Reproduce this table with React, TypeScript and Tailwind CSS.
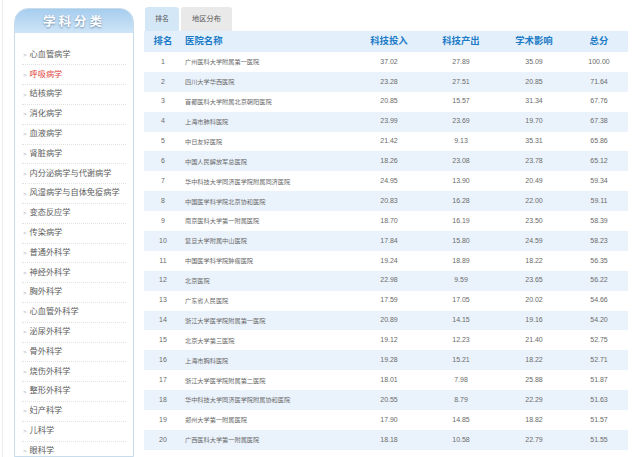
import React from 'react';

const categories = [
  '心血管病学', '呼吸病学', '结核病学', '消化病学', '血液病学', '肾脏病学',
  '内分泌病学与代谢病学', '风湿病学与自体免疫病学', '变态反应学', '传染病学',
  '普通外科学', '神经外科学', '胸外科学', '心血管外科学', '泌尿外科学',
  '骨外科学', '烧伤外科学', '整形外科学', '妇产科学', '儿科学', '眼科学',
];

const rows: [string, string, string, string, string][] = [
  ['广州医科大学附属第一医院', '37.02', '27.89', '35.09', '100.00'],
  ['四川大学华西医院', '23.28', '27.51', '20.85', '71.64'],
  ['首都医科大学附属北京朝阳医院', '20.85', '15.57', '31.34', '67.76'],
  ['上海市肺科医院', '23.99', '23.69', '19.70', '67.38'],
  ['中日友好医院', '21.42', '9.13', '35.31', '65.86'],
  ['中国人民解放军总医院', '18.26', '23.08', '23.78', '65.12'],
  ['华中科技大学同济医学院附属同济医院', '24.95', '13.90', '20.49', '59.34'],
  ['中国医学科学院北京协和医院', '20.83', '16.28', '22.00', '59.11'],
  ['南京医科大学第一附属医院', '18.70', '16.19', '23.50', '58.39'],
  ['复旦大学附属中山医院', '17.84', '15.80', '24.59', '58.23'],
  ['中国医学科学院肿瘤医院', '19.24', '18.89', '18.22', '56.35'],
  ['北京医院', '22.98', '9.59', '23.65', '56.22'],
  ['广东省人民医院', '17.59', '17.05', '20.02', '54.66'],
  ['浙江大学医学院附属第一医院', '20.89', '14.15', '19.16', '54.20'],
  ['北京大学第三医院', '19.12', '12.23', '21.40', '52.75'],
  ['上海市胸科医院', '19.28', '15.21', '18.22', '52.71'],
  ['浙江大学医学院附属第二医院', '18.01', '7.98', '25.88', '51.87'],
  ['华中科技大学同济医学院附属协和医院', '20.55', '8.79', '22.29', '51.63'],
  ['郑州大学第一附属医院', '17.90', '14.85', '18.82', '51.57'],
  ['广西医科大学第一附属医院', '18.18', '10.58', '22.79', '51.55'],
];

const cols = 'grid grid-cols-[38px_172px_70px_74px_72px_58px]';

export default function App() {
  return (
    <div
      className="relative w-[640px] h-[457px] overflow-hidden bg-white flex pl-[14px] pt-[8px] gap-[10px]"
      style={{ fontFamily: '"Liberation Sans", "Noto Sans CJK SC", sans-serif' }}
    >
      {/* 左侧细线 */}
      <div className="absolute left-[2px] top-0 bottom-0 w-px bg-[#ececec]" />

      {/* 学科分类 */}
      <div className="w-[120px] shrink-0 border border-[#c8dcec] rounded-t-[14px] bg-white">
        <div className="h-[24px] rounded-t-[13px] bg-gradient-to-b from-[#a6cdee] to-[#cfe5f7] flex items-center justify-center pt-[2px]">
          <span className="text-white text-[12.5px] font-bold tracking-[3px] [text-shadow:0_1px_2px_rgba(60,90,120,0.6)]">
            学科分类
          </span>
        </div>
        <ul className="pt-[12.6px] px-[7px]">
          {categories.map((c, i) => (
            <li
              key={c}
              className="h-[19.8px] flex items-center border-b border-dotted border-[#e2e2e2] text-[8.2px] leading-none"
            >
              <span className="text-[#aaa] text-[6px] ml-[1px] mr-[3px]">&gt;</span>
              <span className={i === 1 ? 'text-[#e2453c]' : 'text-[#5c5c5c]'}>{c}</span>
            </li>
          ))}
        </ul>
      </div>

      {/* 排名表 */}
      <div className="w-[484px] shrink-0">
        <div className="h-[23px] flex items-end gap-[2px] pl-[1px]">
          <div className="w-[34px] h-[24px] rounded-t-[3px] bg-[#d3e7f6] flex items-center justify-center text-[6.8px] text-[#555]">
            排名
          </div>
          <div className="w-[51px] h-[24px] rounded-t-[3px] bg-[#e9e9e9] flex items-center justify-center text-[7.2px] text-[#555]">
            地区分布
          </div>
        </div>
        <div className={`${cols} h-[21px] items-center bg-[#e3effb] text-[#1c7bc6] font-bold text-[9.4px]`}>
          <div className="text-center">排名</div>
          <div className="pl-[3px]">医院名称</div>
          <div className="text-center">科技投入</div>
          <div className="text-center">科技产出</div>
          <div className="text-center">学术影响</div>
          <div className="text-center">总分</div>
        </div>
        {rows.map((r, i) => (
          <div
            key={r[0]}
            className={`${cols} h-[19.9px] items-center text-[7px] text-[#6a6a6a] ${i % 2 === 1 ? 'bg-[#eaf3fc]' : ''}`}
          >
            <div className="text-center">{i + 1}</div>
            <div className="pl-[3px] text-[6.2px]">{r[0]}</div>
            <div className="text-center">{r[1]}</div>
            <div className="text-center">{r[2]}</div>
            <div className="text-center">{r[3]}</div>
            <div className="text-center">{r[4]}</div>
          </div>
        ))}
      </div>
    </div>
  );
}
